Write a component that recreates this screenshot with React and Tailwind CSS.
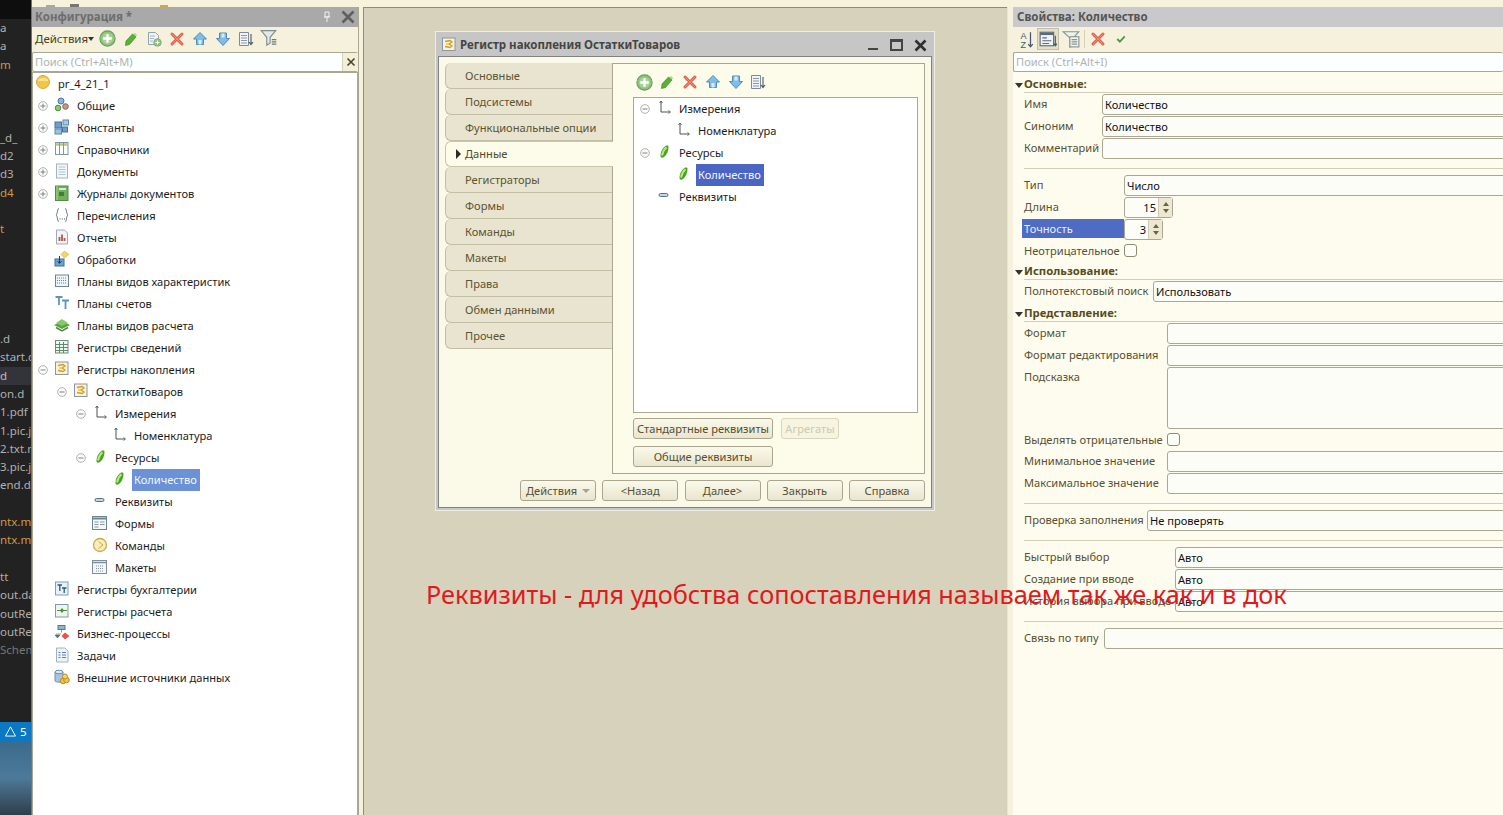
import React from "react";

// --- icons ---
const Ico = ({ children, size = 16 }) => (
  <svg width={size} height={size} viewBox="0 0 16 16" className="shrink-0" fill="none">
    {children}
  </svg>
);

const AddIcon = () => (
  <Ico size={17}>
    <circle cx="8" cy="8" r="7.2" fill="#8fc47c" stroke="#6f9a63" />
    <circle cx="8" cy="8" r="5" fill="#a5d494" />
    <path d="M8 4v8M4 8h8" stroke="#fff" strokeWidth="2.2" />
  </Ico>
);
const PencilIcon = () => (
  <Ico>
    <path d="M3 10 9.500 3l3.500 3-6.500 7.500-4 1z" fill="#58b334" stroke="#3f8a27" strokeWidth=".7" />
    <path d="M10.500 3 12 2l2 2-1 1.500z" fill="#a6d78a" />
  </Ico>
);
const CopyIcon = () => (
  <Ico>
    <path d="M2.5 1.5h7l3 3v9h-10z" fill="#eef3f6" stroke="#8fa3b3" />
    <path d="M4 5h5M4 7.500h4M4 10h3" stroke="#a8b8c4" />
    <circle cx="11.500" cy="11.500" r="3.800" fill="#8cc67a" stroke="#6f9a63" strokeWidth=".6" />
    <path d="M11.500 9.500v4M9.500 11.500h4" stroke="#fff" strokeWidth="1.200" />
  </Ico>
);
const DeleteIcon = () => (
  <Ico>
    <path d="M3 3l10 10M13 3 3 13" stroke="#e2604f" strokeWidth="3" strokeLinecap="round" />
    <path d="M3 3l10 10M13 3 3 13" stroke="#f08a78" strokeWidth="1" strokeLinecap="round" />
  </Ico>
);
const UpIcon = () => (
  <Ico>
    <path d="M8 1.500 14.500 8H11.500v5.500h-7V8H1.500z" fill="#7fbde6" stroke="#4d8cb8" />
    <path d="M6.500 9h3v4.500h-3z" fill="#d5ecfa" />
  </Ico>
);
const DownIcon = () => (
  <Ico>
    <path d="M4.500 2h7v5.500h3L8 14.500 1.500 7.500h3z" fill="#7fbde6" stroke="#4d8cb8" />
    <path d="M6.500 2.500h3v4h-3z" fill="#d5ecfa" />
  </Ico>
);
const SortIcon = () => (
  <Ico>
    <path d="M1.500 1.500h9v13h-9z" fill="#f1f4f6" stroke="#7d8c96" />
    <path d="M3 4.500h6M3 7h6M3 9.500h6M3 12h6" stroke="#8b9aa5" />
    <path d="M13 3v10M11 11l2 2.500 2-2.500" stroke="#46586a" strokeWidth="1.100" />
  </Ico>
);
const FilterIcon = () => (
  <Ico size={18}>
    <path d="M1 .5h13L9 6.500v5l-3 2v-7z" fill="#e3e8e8" stroke="#7f8d8d" />
    <path d="M10.500 8.500h4M10.500 10.500h4M10.500 12.500h4" stroke="#6d7a7a" />
  </Ico>
);
const RootIcon = () => (
  <Ico>
    <circle cx="8" cy="8" r="6.500" fill="#f0c64a" stroke="#d8a83a" />
    <path d="M2.500 7c1-4 10-4 11 0z" fill="#f8e08c" />
  </Ico>
);
const CommonIcon = () => (
  <Ico>
    <circle cx="7" cy="4" r="3" fill="#8eb3dc" stroke="#4a76a8" />
    <circle cx="4" cy="11" r="2.800" fill="#8ecb70" stroke="#4c8b38" />
    <circle cx="11.500" cy="9.500" r="2.800" fill="#c49a84" stroke="#8a6350" />
  </Ico>
);
const ConstIcon = () => (
  <Ico>
    <rect x="1" y="3" width="6.500" height="6" fill="#6f9ec8" stroke="#44749f" />
    <rect x="9" y="1" width="5.500" height="5" fill="#a8c8e4" stroke="#5b88ae" />
    <rect x="1" y="10" width="6.500" height="5" fill="#9cc0de" stroke="#5b88ae" />
    <rect x="8.500" y="8" width="5" height="5" fill="#6f9ec8" stroke="#44749f" />
  </Ico>
);
const CatalogIcon = () => (
  <Ico>
    <rect x="1.500" y="1.500" width="12.500" height="12" fill="#fff" stroke="#7f96a8" />
    <path d="M1.500 3.500H14" stroke="#b8c67e" strokeWidth="2.500" />
    <path d="M5.500 1.500v12M9.500 1.500v12" stroke="#7f96a8" />
  </Ico>
);
const DocIcon = () => (
  <Ico>
    <rect x="2.500" y="1" width="11" height="14" fill="#f4f7fa" stroke="#a3b3c2" />
    <path d="M4.500 4h7M4.500 6.500h7M4.500 9h7M4.500 11.500h7" stroke="#b4c3d0" />
  </Ico>
);
const JournalIcon = () => (
  <Ico>
    <rect x="1.500" y="1" width="12.500" height="14.500" fill="#72b060" stroke="#4f8c42" />
    <rect x="5" y="3" width="7" height="2" fill="#d9eccf" />
    <rect x="5" y="7" width="5" height="4" fill="#3f7f38" />
    <path d="M3 1v14" stroke="#a8d296" />
  </Ico>
);
const EnumIcon = () => (
  <Ico>
    <path d="M5 1.500C3 1.500 4 6.500 2 8c2 1.500 1 6.500 3 6.500M11 1.500c2 0 1 5 3 6.500-2 1.500-1 6.500-3 6.500" stroke="#5f6f7d" />
    <path d="M5.500 12h1M7.800 12h1M10 12h1" stroke="#46586a" />
  </Ico>
);
const ReportIcon = () => (
  <Ico>
    <path d="M2.500 1h8l3 3v11h-11z" fill="#f2f3f6" stroke="#a3a9b5" />
    <path d="M5.500 12V8M8 12V5.500M10.500 12V9" stroke="#b5544e" strokeWidth="1.800" />
  </Ico>
);
const ProcessIcon = () => (
  <Ico>
    <path d="M10.500 0 15 3.500 10.500 7 7 3.500z" fill="#f3d46a" stroke="#d9b03e" strokeWidth=".6" />
    <rect x="1" y="8" width="9" height="7" fill="#6ea6d0" stroke="#38709c" />
    <path d="M5.500 5v7M3.500 10l2 2.500 2-2.500" stroke="#1c3c58" />
  </Ico>
);
const PvhIcon = () => (
  <Ico>
    <rect x="1.500" y="2" width="13" height="11.500" fill="#eef3f6" stroke="#71838f" />
    <path d="M3 5h10M3 7.500h10M3 10h10" stroke="#71838f" strokeDasharray="1 1" />
  </Ico>
);
const AccountsIcon = () => (
  <Ico>
    <path d="M1.500 2h7M5 2v8M8 5.500h7M11.500 5.500V14" stroke="#5b94bd" strokeWidth="1.800" />
  </Ico>
);
const PvrIcon = () => (
  <Ico>
    <path d="M0 8l8-4 8 4-8 4z" fill="#5aa344" />
    <path d="M2 6l6-4 6 4-6 3z" fill="#86c96a" />
    <path d="M2 10.500 8 14l6-3.500" stroke="#4a8b36" strokeWidth="1.500" />
  </Ico>
);
const InfoRegIcon = () => (
  <Ico>
    <rect x="1.500" y="1.500" width="12.500" height="12.500" fill="#eef6ee" stroke="#6f8d7d" />
    <path d="M1.500 5.500H14M1.500 8.500H14M1.500 11.500H14M5.500 3v11M9.500 3v11" stroke="#5d8a70" />
  </Ico>
);
const AccumIcon = () => (
  <Ico>
    <rect x="1.500" y="1" width="12.500" height="12.500" fill="#f8f4dc" stroke="#8c95a0" />
    <path d="M4 4.500 9 3.500l2 1.500-3 2 3 2-2 1.500-5-1" stroke="#d99a1f" strokeWidth="1.300" />
    <path d="M5 7h3" stroke="#ecc94f" strokeWidth="1.500" />
  </Ico>
);
const AxesIcon = () => (
  <Ico>
    <path d="M5 1v11h9" stroke="#46525e" />
    <path d="M3.500 3 5 1l1.500 2M12.500 10.500 14.500 12l-2 1.500" stroke="#46525e" strokeWidth=".8" />
  </Ico>
);
const LeafIcon = () => (
  <Ico>
    <path d="M4.500 12C4.500 8 6 4.500 9.500 2c1.500-.8 3-.4 3 1 0 3.500-1.500 7.500-4.500 10-1.800 1.200-3.500.7-3.500-1z" fill="#45a51c" />
    <path d="M6 11.500C6.500 8.500 7.800 5.500 10.500 3.200" stroke="#b9e584" strokeWidth="2" />
  </Ico>
);
const AttrIcon = () => (
  <Ico>
    <rect x="3" y="5.500" width="9" height="3" rx="1.500" fill="#c8d6e0" stroke="#54708a" />
  </Ico>
);
const FormIcon = () => (
  <Ico>
    <rect x=".5" y="1.500" width="14" height="13" fill="#f4f7f9" stroke="#6f8492" />
    <path d="M.5 3.500h14" stroke="#6f8492" strokeWidth="2" />
    <path d="M2.500 7h4M2.500 9.500h4M2.500 12h4M8 7h4.500M8 9.500h4.500" stroke="#8597a3" />
  </Ico>
);
const CommandIcon = () => (
  <Ico>
    <circle cx="8" cy="8" r="6.500" fill="#f9eebb" stroke="#c8a84a" strokeWidth="1.300" />
    <path d="M6.500 4.500 11 8l-4.500 3.500" stroke="#c8a84a" />
  </Ico>
);
const LayoutIcon = () => (
  <Ico>
    <rect x=".5" y="1.500" width="14" height="13" fill="#f4f7f9" stroke="#7c8f9c" />
    <path d="M.5 3.500h14" stroke="#7c8f9c" strokeWidth="1.500" />
    <path d="M4 7h7M4 9.500h7M4 12h7" stroke="#7c8f9c" strokeDasharray="1 1" />
  </Ico>
);
const AccRegIcon = () => (
  <Ico>
    <rect x="1.500" y="1" width="12.500" height="13" fill="#e6f1f8" stroke="#7fa0b8" />
    <path d="M3.500 4H8M5.800 4v6M8 7h4.500M10.200 7v5" stroke="#2f5b7c" strokeWidth="1.300" />
  </Ico>
);
const CalcRegIcon = () => (
  <Ico>
    <rect x="1.500" y="1.500" width="12.500" height="12.500" fill="#eef5ee" stroke="#7f9aa8" />
    <path d="M3 7.500h10" stroke="#4f8f3c" />
    <path d="M8 5 6 7.500 8 10l2-2.500z" fill="#4f8f3c" />
  </Ico>
);
const BpIcon = () => (
  <Ico>
    <rect x="4" y="0.500" width="7" height="4" fill="#8fb4d0" stroke="#4e7a9b" />
    <path d="M7.500 4.500v3M2 9h5M1 10l2.500 3L6 10z" stroke="#5e6870" fill="#5e6870" strokeWidth=".6" />
    <path d="M11 7.500 15.500 11 11 14.500 7.500 11z" fill="#e4544a" />
  </Ico>
);
const TaskIcon = () => (
  <Ico>
    <path d="M2.500 1h8.500l3 3v11h-11.500z" fill="#eef3fa" stroke="#a0b2c8" />
    <path d="M4.500 5.500h2M8 5.500h4M4.500 8h2M8 8h4M4.500 10.500h2M8 10.500h4" stroke="#5f82ad" />
  </Ico>
);
const ExternalIcon = () => (
  <Ico>
    <path d="M1 3v9c0 1.500 8 1.500 8 0V3z" fill="#a9c5dd" stroke="#6e8fac" />
    <ellipse cx="5" cy="3" rx="4" ry="1.800" fill="#d7e6f2" stroke="#6e8fac" />
    <circle cx="9" cy="12" r="2.800" fill="#eec24b" stroke="#bd8f20" />
    <circle cx="12.500" cy="11" r="2.800" fill="#eec24b" stroke="#bd8f20" />
    <circle cx="11" cy="7.500" r="2.500" fill="#f3d570" stroke="#bd8f20" />
  </Ico>
);
const AzIcon = () => (
  <Ico size={18}>
    <path d="M12 2v13M10 12.500l2 2.500 2-2.500" stroke="#44586a" strokeWidth="1.100" />
    <text x="3" y="8" fontSize="8" fontFamily="Liberation Sans" fill="#44586a">A</text>
    <text x="3" y="16" fontSize="8" fontFamily="Liberation Sans" fill="#44586a">Z</text>
  </Ico>
);
const PropSortIcon = () => (
  <Ico size={18}>
    <rect x="1" y="2" width="12" height="12" fill="#f0f4f6" stroke="#5a6c78" />
    <path d="M1 3.500h12" stroke="#5a6c78" strokeWidth="2" />
    <path d="M3 7h4M3 9.500h8M3 12h6" stroke="#5a6c78" />
    <path d="M14.500 5v9M13 12l1.500 2 1.500-2" stroke="#3f5a6c" />
  </Ico>
);
const PropFilterIcon = () => (
  <Ico size={18}>
    <path d="M1 1.500h14L10 7v7l-3 1V7z" fill="#eef0ea" stroke="#87948d" />
    <rect x="7" y="6" width="8" height="9" fill="#f4f6f6" stroke="#87948d" />
    <path d="M8.500 8.500h5M8.500 10.500h5M8.500 12.500h5" stroke="#87948d" />
  </Ico>
);
const CheckIcon = () => (
  <Ico size={12}>
    <path d="M3 8l3.500 3.500L13 4.500" stroke="#4f9a36" strokeWidth="2.400" />
  </Ico>
);

const Expander = ({ open }) => (
  <svg width="10" height="10" viewBox="0 0 10 10" className="shrink-0" fill="none">
    <circle cx="5" cy="5" r="4.300" stroke="#a5a79e" strokeWidth=".9" />
    <path d={open ? "M2.500 5h5" : "M2.500 5h5M5 2.500v5"} stroke="#7f817a" />
  </svg>
);

// --- tree ---
const pads = {
  1: "pl-[5px]",
  2: "pl-[24px]",
  3: "pl-[43px]",
  4: "pl-[62px]",
};

const TreeRow = ({ level, exp, icon, label, selected, selectedClass = "bg-[#6a92d4]" }) => (
  <div className={`flex items-center h-[22px] whitespace-nowrap ${pads[level]}`}>
    <span className="w-[10px] shrink-0 flex">{exp && <Expander open={exp === "open"} />}</span>
    <span className="w-[16px] ml-[6px] shrink-0 flex justify-center -mt-[3px]">{icon}</span>
    <span
      className={
        selected
          ? `ml-[5px] pl-[2px] pr-[3px] h-[22px] leading-[22px] text-[#f2f6ff] ${selectedClass}`
          : "ml-[7px] text-[#1d1d1d]"
      }
    >
      {label}
    </span>
  </div>
);

const configTree = [
  { level: 1, exp: "closed", icon: <CommonIcon />, label: "Общие" },
  { level: 1, exp: "closed", icon: <ConstIcon />, label: "Константы" },
  { level: 1, exp: "closed", icon: <CatalogIcon />, label: "Справочники" },
  { level: 1, exp: "closed", icon: <DocIcon />, label: "Документы" },
  { level: 1, exp: "closed", icon: <JournalIcon />, label: "Журналы документов" },
  { level: 1, icon: <EnumIcon />, label: "Перечисления" },
  { level: 1, icon: <ReportIcon />, label: "Отчеты" },
  { level: 1, icon: <ProcessIcon />, label: "Обработки" },
  { level: 1, icon: <PvhIcon />, label: "Планы видов характеристик" },
  { level: 1, icon: <AccountsIcon />, label: "Планы счетов" },
  { level: 1, icon: <PvrIcon />, label: "Планы видов расчета" },
  { level: 1, icon: <InfoRegIcon />, label: "Регистры сведений" },
  { level: 1, exp: "open", icon: <AccumIcon />, label: "Регистры накопления" },
  { level: 2, exp: "open", icon: <AccumIcon />, label: "ОстаткиТоваров" },
  { level: 3, exp: "open", icon: <AxesIcon />, label: "Измерения" },
  { level: 4, icon: <AxesIcon />, label: "Номенклатура" },
  { level: 3, exp: "open", icon: <LeafIcon />, label: "Ресурсы" },
  { level: 4, icon: <LeafIcon />, label: "Количество", selected: true },
  { level: 3, icon: <AttrIcon />, label: "Реквизиты" },
  { level: 3, icon: <FormIcon />, label: "Формы" },
  { level: 3, icon: <CommandIcon />, label: "Команды" },
  { level: 3, icon: <LayoutIcon />, label: "Макеты" },
  { level: 1, icon: <AccRegIcon />, label: "Регистры бухгалтерии" },
  { level: 1, icon: <CalcRegIcon />, label: "Регистры расчета" },
  { level: 1, icon: <BpIcon />, label: "Бизнес-процессы" },
  { level: 1, icon: <TaskIcon />, label: "Задачи" },
  { level: 1, icon: <ExternalIcon />, label: "Внешние источники данных" },
];

const dialogTree = [
  { level: 1, exp: "open", icon: <AxesIcon />, label: "Измерения" },
  { level: 2, icon: <AxesIcon />, label: "Номенклатура" },
  { level: 1, exp: "open", icon: <LeafIcon />, label: "Ресурсы" },
  { level: 2, icon: <LeafIcon />, label: "Количество", selected: true },
  { level: 1, icon: <AttrIcon />, label: "Реквизиты" },
];

// --- editor column behind the windows ---
const editorRows = [
  ["a"], ["a"], ["m", "o"], [], [], [], ["_d_"], ["d2"], ["d3"], ["d4", "o"], [], ["t", "o"],
  [], [], [], [], [], [".d"], ["start.d"], ["d", "s"], ["on.d"], ["1.pdf"], ["1.pic.jpg"],
  ["2.txt.md"], ["3.pic.jpg"], ["end.d"], [], ["ntx.md", "o"], ["ntx.md", "o"], [], ["tt"],
  ["out.dat"], ["outRead"], ["outRead"], ["Schema", "d"],
];

const rowColors = {
  o: "text-[#d19a3a]",
  s: "text-[#bdbdbd] bg-[#33333a]",
  d: "text-[#777777]",
};

const EditorStrip = () => (
  <div className="w-[32px] shrink-0 h-full flex flex-col bg-[#222222] overflow-hidden border-r border-[#77756a]">
    <div className="h-[19px] shrink-0 bg-[#0e0e0e]" />
    <div className="h-[703px] shrink-0 overflow-hidden">
      {editorRows.map((row, i) => (
        <div
          key={i}
          className={`h-[18.3px] leading-[18px] text-[11.5px] whitespace-nowrap overflow-hidden ${rowColors[row[1]] || "text-[#b0b0b0]"}`}
        >
          {row[0]}
        </div>
      ))}
    </div>
    <div className="h-[19px] shrink-0 bg-[#0a78c2] text-white text-[11.5px] leading-[19px] flex items-center gap-[4px] whitespace-nowrap overflow-hidden pl-[5px]">
      <svg width="11" height="11" viewBox="0 0 12 12" fill="none" className="shrink-0">
        <path d="M6 1 11.500 11H.5z" stroke="#fff" />
      </svg>
      5
    </div>
    <div className="flex-1 bg-gradient-to-b from-[#3b6a8c] via-[#4d7a9a] to-[#2f3f4c]" />
  </div>
);

// --- shared bits ---
const ToolCell = ({ children, className = "w-[23px]" }) => (
  <span className={`flex justify-center items-center shrink-0 ${className}`}>{children}</span>
);

const SearchBox = ({ placeholder, clear }) => (
  <div className="h-[20px] shrink-0 flex bg-[#fbffff] border-y border-[#aaa792] rounded-[2px] border-l">
    <span className="flex-1 pl-[2px] leading-[18px] text-[#b3b3ae]">{placeholder}</span>
    {clear && (
      <span className="w-[16px] bg-[#f3efd8] flex items-center justify-center border-l border-[#d5d1ba]">
        <svg width="10" height="10" viewBox="0 0 10 10" fill="none">
          <path d="M1.500 1.500l7 7M8.500 1.500l-7 7" stroke="#4a4325" strokeWidth="1.600" />
        </svg>
      </span>
    )}
  </div>
);

const DlgButton = ({ children, className = "", disabled }) => (
  <span
    className={`h-[21px] flex items-center justify-center rounded-[3px] border whitespace-nowrap ${
      disabled
        ? "border-[#d9d5bf] text-[#cfc9b0] bg-[#f7f4e2]"
        : "border-[#aaa68e] text-[#554f30] bg-gradient-to-b from-[#fbf9ea] to-[#e9e5cf]"
    } ${className}`}
  >
    {children}
  </span>
);

const tabs = [
  "Основные",
  "Подсистемы",
  "Функциональные опции",
  "Данные",
  "Регистраторы",
  "Формы",
  "Команды",
  "Макеты",
  "Права",
  "Обмен данными",
  "Прочее",
];

// --- configuration panel ---
const ConfigPanel = () => (
  <div className="w-[326px] shrink-0 flex flex-col bg-[#f5f1dc]">
    <div className="h-[20px] shrink-0 bg-[#a9a9a9] flex items-center pl-[3px] pr-[3px] pb-[1px] text-[11.5px]">
      <span className="flex-1 font-bold text-[#6d6d6d]">Конфигурация *</span>
      <svg width="10" height="12" viewBox="0 0 10 12" fill="none" className="mr-[9px]">
        <path d="M3 1h4v5H3zM5 6v5M2 6h6" stroke="#f0f0f0" />
      </svg>
      <svg width="14" height="14" viewBox="0 0 14 14" fill="none">
        <path d="M1.500 1.500l11 11M12.500 1.500l-11 11" stroke="#5f5f5f" strokeWidth="2.600" />
      </svg>
    </div>
    <div className="h-[25px] shrink-0 flex items-center pl-[3px] pb-[2px]">
      <span className="text-[#463f20] w-[52px] text-[11.5px]">Действия</span>
      <span className="ml-[1px] mr-[2px] w-0 h-0 border-x-[3px] border-x-transparent border-t-[4px] border-t-[#333]" />
      <ToolCell><AddIcon /></ToolCell>
      <ToolCell><PencilIcon /></ToolCell>
      <ToolCell><CopyIcon /></ToolCell>
      <ToolCell><DeleteIcon /></ToolCell>
      <ToolCell><UpIcon /></ToolCell>
      <ToolCell><DownIcon /></ToolCell>
      <ToolCell><SortIcon /></ToolCell>
      <ToolCell><FilterIcon /></ToolCell>
    </div>
    <SearchBox placeholder="Поиск (Ctrl+Alt+M)" clear />
    <div className="flex-1 bg-white border-x border-t border-[#aaa792]">
      <div className="flex items-center h-[22px] pl-[2px]">
        <span className="-mt-[4px]"><RootIcon /></span>
        <span className="ml-[7px] text-[#1d1d1d]">pr_4_21_1</span>
      </div>
      {configTree.map((row) => (
        <TreeRow key={row.label + row.level} {...row} />
      ))}
    </div>
  </div>
);

// --- dialog window ---
const RegisterDialog = () => (
  <div className="w-[498px] h-[478px] flex flex-col border-2 border-[#c6c6c6] outline outline-1 outline-[#efeee4] bg-[#c6c6c6]">
    <div className="h-[22px] shrink-0 flex items-center pl-[3px] pr-[5px] text-[11.5px]">
      <AccumIcon />
      <span className="ml-[3px] flex-1 font-bold text-[#45453f]">Регистр накопления ОстаткиТоваров</span>
      <span className="w-[10px] h-[2px] mt-[8px] bg-[#45453f] mr-[12px]" />
      <span className="w-[13px] h-[12px] border-2 border-t-[3px] border-[#45453f] mr-[11px]" />
      <svg width="13" height="13" viewBox="0 0 13 13" fill="none">
        <path d="M1.500 1.500l10 10M11.500 1.500l-10 10" stroke="#2f2f2f" strokeWidth="2.600" />
      </svg>
    </div>
    <div className="flex-1 bg-[#fbf9e8] border border-[#7f8180] pl-[6px] pt-[6px]">
      <div className="flex h-[411px]">
        <div className="w-[167px] shrink-0">
          {tabs.map((tab) =>
            tab === "Данные" ? (
              <div
                key={tab}
                className="h-[26px] flex items-center relative z-10 -mr-[1px] bg-[#fdfbea] border-y border-l border-[#c9c5ab] rounded-l-[6px]"
              >
                <span className="ml-[10px] w-0 h-0 border-y-[5px] border-y-transparent border-l-[5px] border-l-[#2a2a2a]" />
                <span className="ml-[4px] text-[#4f4a2b]">{tab}</span>
              </div>
            ) : (
              <div
                key={tab}
                className="h-[26px] flex items-center pl-[19px] bg-[#e9e4cf] border-b border-l border-[#c2bea4] rounded-l-[6px] text-[#5c5330]"
              >
                {tab}
              </div>
            )
          )}
        </div>
        <div className="w-[313px] shrink-0 border border-[#a9a68e] bg-[#fdfbea] pl-[20px] pt-[8px]">
          <div className="h-[20px] flex items-center">
            <ToolCell className="w-[22.8px]"><AddIcon /></ToolCell>
            <ToolCell className="w-[22.8px]"><PencilIcon /></ToolCell>
            <ToolCell className="w-[22.8px]"><DeleteIcon /></ToolCell>
            <ToolCell className="w-[22.8px]"><UpIcon /></ToolCell>
            <ToolCell className="w-[22.8px]"><DownIcon /></ToolCell>
            <ToolCell className="w-[22.8px]"><SortIcon /></ToolCell>
          </div>
          <div className="mt-[5px] w-[285px] h-[316px] bg-white border border-[#aaa792] pl-[1px]">
            {dialogTree.map((row) => (
              <TreeRow key={row.label + row.level} {...row} selectedClass="bg-[#4a65c2]" />
            ))}
          </div>
          <div className="mt-[5px] flex gap-[8px]">
            <DlgButton className="w-[140px]">Стандартные реквизиты</DlgButton>
            <DlgButton className="w-[58px]" disabled>Агрегаты</DlgButton>
          </div>
          <DlgButton className="mt-[7px] w-[140px]">Общие реквизиты</DlgButton>
        </div>
      </div>
      <div className="mt-[6px] flex justify-end gap-[6.25px] pr-[6px]">
        <DlgButton className="w-[76px]">
          <span className="flex-1 pl-[5px]">Действия</span>
          <span className="mr-[5px] w-0 h-0 border-x-[4px] border-x-transparent border-t-[4px] border-t-[#a8a48c]" />
        </DlgButton>
        <DlgButton className="w-[76px]">&lt;Назад</DlgButton>
        <DlgButton className="w-[76px]">Далее&gt;</DlgButton>
        <DlgButton className="w-[76px]">Закрыть</DlgButton>
        <DlgButton className="w-[76px]">Справка</DlgButton>
      </div>
    </div>
  </div>
);

// --- properties panel ---
const Field = ({ value, className = "h-[21px]" }) => (
  <div className={`flex-1 -mr-[10px] bg-[#fdfdf8] border border-[#aaa792] rounded-l-[3px] pl-[2px] leading-[20px] text-[#111] ${className}`}>
    {value}
  </div>
);

const Row = ({ label, labelClass, value, rowClass = "h-[22px]", fieldClass }) => (
  <div className={`flex ${rowClass}`}>
    <div className={`shrink-0 pl-[11px] leading-[20px] whitespace-nowrap text-[#5a5030] ${labelClass}`}>{label}</div>
    <Field value={value} className={fieldClass} />
  </div>
);

const Section = ({ label, className }) => (
  <div className={`flex mb-[1px] ${className}`}>
    <div className="w-[11px] shrink-0 flex items-end pb-[5px] pl-[2px]">
      <span className="w-0 h-0 border-x-[4px] border-x-transparent border-t-[5px] border-t-[#333]" />
    </div>
    <div className="flex-1 border-b border-[#d2ceb6] flex items-end pb-[1px] font-bold text-[#574c20] leading-[14px] text-[11.3px]">
      {label}
    </div>
  </div>
);

const Separator = () => <div className="h-[15px] ml-[11px] pt-[8px]"><div className="h-px bg-[#d2ceb6]" /></div>;

const Spinner = ({ value, className }) => (
  <div className={`h-[21px] flex bg-[#fdfdf8] border border-[#aaa792] rounded-[3px] ${className}`}>
    <span className="flex-1 text-right pr-[2px] leading-[20px] text-[#111]">{value}</span>
    <span className="w-[14px] flex flex-col items-center justify-center gap-[3px] bg-[#ece8d2] border-l border-[#cfcbb3]">
      <span className="w-0 h-0 border-x-[3px] border-x-transparent border-b-[4px] border-b-[#6b6440]" />
      <span className="w-0 h-0 border-x-[3px] border-x-transparent border-t-[4px] border-t-[#6b6440]" />
    </span>
  </div>
);

const Check = () => <span className="w-[13px] h-[13px] mt-[3px] block bg-[#fdfdf8] border border-[#8f8c76] rounded-[3px]" />;

const PropsPanel = () => (
  <div className="flex-1 min-w-0 flex flex-col bg-[#fdfcef] overflow-hidden">
    <div className="h-[20px] shrink-0 bg-[#c9c9cb] flex items-center pl-[4px] pb-[1px] font-bold text-[#55554f] text-[11.5px]">
      Свойства: Количество
    </div>
    <div className="h-[25px] shrink-0 flex items-center bg-[#f5f1dc] pl-[1px] pb-[2px]">
      <ToolCell><AzIcon /></ToolCell>
      <ToolCell className="w-[22px] h-[22px] bg-[#e3dfc8] border border-[#c4c0a8]"><PropSortIcon /></ToolCell>
      <ToolCell><PropFilterIcon /></ToolCell>
      <span className="w-px h-[18px] bg-[#d5d1ba] mx-[2px]" />
      <ToolCell className="w-[22px]"><DeleteIcon /></ToolCell>
      <ToolCell><CheckIcon /></ToolCell>
    </div>
    <SearchBox placeholder="Поиск (Ctrl+Alt+I)" />
    <Section label="Основные:" className="h-[21px]" />
    <Row label="Имя" labelClass="w-[89px]" value="Количество" />
    <Row label="Синоним" labelClass="w-[89px]" value="Количество" />
    <Row label="Комментарий" labelClass="w-[89px]" />
    <Separator />
    <Row label="Тип" labelClass="w-[111px]" value="Число" />
    <div className="flex h-[22px]">
      <div className="w-[111px] shrink-0 pl-[11px] leading-[20px] text-[#5a5030]">Длина</div>
      <Spinner value="15" className="w-[49px]" />
    </div>
    <div className="flex h-[22px]">
      <div className="ml-[9px] w-[102px] h-[19px] shrink-0 pl-[2px] leading-[19px] bg-[#4f6cc4] text-[#e8edfb]">Точность</div>
      <Spinner value="3" className="w-[39px]" />
    </div>
    <div className="flex h-[22px]">
      <div className="w-[111px] shrink-0 pl-[11px] leading-[20px] whitespace-nowrap text-[#5a5030]">Неотрицательное</div>
      <Check />
    </div>
    <Section label="Использование:" className="h-[17px]" />
    <Row label="Полнотекстовый поиск" labelClass="w-[140px]" value="Использовать" />
    <Section label="Представление:" className="h-[19px]" />
    <Row label="Формат" labelClass="w-[154px]" />
    <Row label="Формат редактирования" labelClass="w-[154px]" />
    <Row label="Подсказка" labelClass="w-[154px]" rowClass="h-[63px]" fieldClass="h-[62px]" />
    <div className="flex h-[21px]">
      <div className="w-[154px] shrink-0 pl-[11px] leading-[20px] whitespace-nowrap text-[#5a5030]">Выделять отрицательные</div>
      <Check />
    </div>
    <Row label="Минимальное значение" labelClass="w-[154px]" />
    <Row label="Максимальное значение" labelClass="w-[154px]" />
    <Separator />
    <Row label="Проверка заполнения" labelClass="w-[134px]" value="Не проверять" />
    <Separator />
    <Row label="Быстрый выбор" labelClass="w-[162px]" value="Авто" />
    <Row label="Создание при вводе" labelClass="w-[162px]" value="Авто" />
    <Row label="История выбора при вводе" labelClass="w-[162px]" value="Авто" />
    <Separator />
    <Row label="Связь по типу" labelClass="w-[91px]" />
  </div>
);

export default function App() {
  return (
    <div className="relative w-[1503px] h-[815px] flex overflow-hidden font-['Noto_Sans',sans-serif] text-[11.1px] leading-[16px]">
      <EditorStrip />
      <div className="flex-1 min-w-0 flex flex-col bg-[#f5f1dc]">
        <div className="h-[7px] shrink-0 overflow-hidden flex items-end pl-[14px] gap-[15px] bg-[#f6f2dc]">
          <span className="w-[9px] h-[2px] bg-[#a9a9a0]" />
          <span className="w-[9px] h-[3px] bg-[#77776f]" />
          <span className="ml-[66px] w-[8px] h-[2px] bg-[#d9a53c]" />
        </div>
        <div className="flex-1 min-h-0 flex">
          <ConfigPanel />
          <div className="w-[5px] shrink-0 border-l border-[#aaa792]" />
          <div className="w-[644px] shrink-0 bg-[#d6d2bc] border-l border-t border-[#8d8b7c] pl-[72px] pt-[24px]">
            <RegisterDialog />
          </div>
          <div className="w-[6px] shrink-0 bg-[#f5f1dc] border-l border-[#e8e4cd]" />
          <PropsPanel />
        </div>
      </div>
      <div className="absolute left-[426px] top-[577px] text-[25.3px] leading-[34px] whitespace-nowrap text-[#e3181c]">
        Реквизиты - для удобства сопоставления называем так же как и в док
      </div>
    </div>
  );
}
